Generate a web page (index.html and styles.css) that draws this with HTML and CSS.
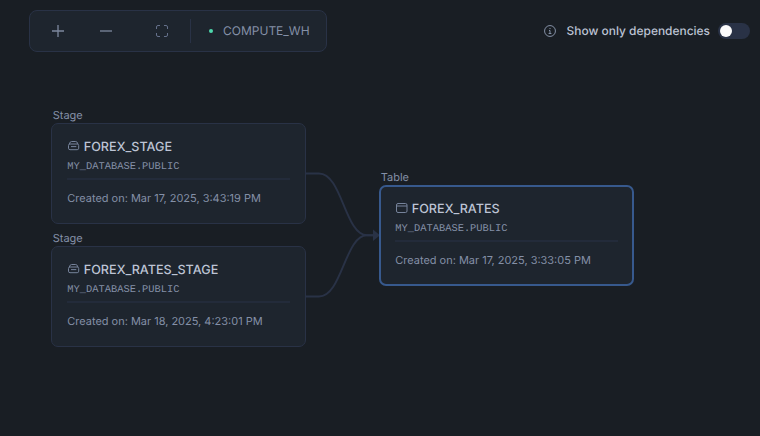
FILE: index.html
```html
<!DOCTYPE html>
<html lang="en">
<head>
<meta charset="utf-8">
<title>Lineage</title>
<link rel="stylesheet" href="styles.css">
</head>
<body>
<svg class="symbols" aria-hidden="true">
  <symbol id="stage" viewBox="0 0 13 12">
    <path d="M2.200 4.200 L3.300 2 Q3.700 1.500 4.500 1.500 H8.700 Q9.500 1.500 9.900 2 L11 4.200"/>
    <rect x="1.500" y="4" width="10.200" height="5.700" rx="1.500"/>
    <path d="M4 6.600 H9.300"/>
  </symbol>
  <symbol id="table" viewBox="0 0 13 12">
    <rect x="1.500" y="1.500" width="10.500" height="9" rx="1.500"/>
    <path d="M1.500 4 H12"/>
  </symbol>
</svg>
<header class="topbar">
  <div class="toolbar">
    <button class="tool zoom-in" aria-label="Zoom in"><svg width="12" height="12" viewBox="0 0 12 12"><path d="M6 0V12M0 6H12"/></svg></button>
    <button class="tool zoom-out" aria-label="Zoom out"><svg width="12" height="12" viewBox="0 0 12 12"><path d="M0 6H12"/></svg></button>
    <button class="tool fit" aria-label="Fit view"><svg width="12" height="12" viewBox="0 0 12 12"><path d="M.5 4V2Q.5.5 2 .5H4M8 .5H10Q11.500.5 11.500 2V4M11.500 8V10Q11.500 11.500 10 11.500H8M4 11.500H2Q.5 11.500.5 10V8"/></svg></button>
    <span class="divider"></span>
    <span class="status"></span>
    <span class="warehouse">COMPUTE_WH</span>
  </div>
  <div class="filter">
    <svg class="info" width="12" height="12" viewBox="0 0 12 12"><circle cx="6" cy="6" r="5.450"/><path d="M6 3V4.100M5 5.500H6V8.500M4.600 8.500H7.400"/></svg>
    <span class="filter-label">Show only dependencies</span>
    <span class="switch"><span class="knob"></span></span>
  </div>
</header>
<main class="canvas">
  <svg class="edges" width="760" height="436" viewBox="0 0 760 436">
    <path class="edge" d="M306 173.500H319C342 173.500 345 235.300 367 235.300H374"/>
    <path class="edge" d="M306 296.500H319C342 296.500 345 235.300 367 235.300H374"/>
    <path class="arrow" d="M373 229.500L380 235.300L373 241Z"/>
  </svg>
  <section class="node forex-stage">
    <div class="kind">Stage</div>
    <article class="card">
      <h2 class="name"><svg class="icon"><use href="#stage"/></svg>FOREX_STAGE</h2>
      <div class="schema">MY_DATABASE.PUBLIC</div>
      <div class="created">Created on: Mar 17, 2025, 3:43:19 PM</div>
    </article>
  </section>
  <section class="node rates-stage">
    <div class="kind">Stage</div>
    <article class="card">
      <h2 class="name"><svg class="icon"><use href="#stage"/></svg>FOREX_RATES_STAGE</h2>
      <div class="schema">MY_DATABASE.PUBLIC</div>
      <div class="created">Created on: Mar 18, 2025, 4:23:01 PM</div>
    </article>
  </section>
  <section class="node rates-table">
    <div class="kind">Table</div>
    <article class="card selected">
      <h2 class="name"><svg class="icon"><use href="#table"/></svg>FOREX_RATES</h2>
      <div class="schema">MY_DATABASE.PUBLIC</div>
      <div class="created">Created on: Mar 17, 2025, 3:33:05 PM</div>
    </article>
  </section>
</main>
</body>
</html>
```
FILE: styles.css
```css
* { box-sizing: border-box; }
body {
  margin: 0;
  width: 760px;
  height: 436px;
  overflow: hidden;
  position: relative;
  background: #191e24;
  color: #8490a7;
  font-family: Inter, "Liberation Sans", sans-serif;
  text-rendering: geometricPrecision;
}
svg { display: block; flex: none; }
.symbols { position: absolute; width: 0; height: 0; }
.topbar {
  display: flex;
  justify-content: space-between;
  align-items: center;
  padding: 10px 10px 0 29px;
}
.toolbar {
  display: flex;
  align-items: center;
  width: 298px;
  height: 42px;
  padding-left: 22px;
  border: 1px solid #293246;
  border-radius: 8px;
  background: #1e252e;
}
.tool {
  padding: 0;
  border: 0;
  background: none;
}
.tool svg {
  fill: none;
  stroke: #7d889e;
  stroke-width: 1.3;
}
.zoom-out { margin-left: 36px; }
.fit { margin-left: 44px; }
.fit svg { stroke: #65718b; stroke-width: 1; }
.divider {
  width: 1px;
  height: 24px;
  margin-left: 22px;
  background: #293246;
}
.status {
  width: 4px;
  height: 4px;
  margin-left: 18px;
  border-radius: 50%;
  background: #4fd8ad;
}
.warehouse {
  margin-left: 10px;
  font-size: 12px;
  line-height: 16px;
}
.filter { display: flex; align-items: center; }
.info { fill: none; stroke: #8490a5; stroke-width: 1; }
.filter-label {
  margin-left: 10.500px;
  color: #bdc4d5;
  font-size: 11.950px;
  font-weight: 500;
  line-height: 16px;
}
.switch {
  width: 32px;
  height: 16px;
  margin-left: 8px;
  padding: 2px;
  border-radius: 8px;
  background: #293246;
}
.knob {
  display: block;
  width: 12px;
  height: 12px;
  border-radius: 50%;
  background: #fbfbfb;
}
.edges { position: absolute; left: 0; top: 0; }
.edge { fill: none; stroke: #293246; stroke-width: 1.9; }
.arrow { fill: #293246; }
.node { position: absolute; width: 255px; }
.forex-stage { left: 51px; top: 107px; }
.rates-stage { left: 51px; top: 230px; }
.rates-table { left: 379px; top: 169px; }
.kind {
  height: 16px;
  padding-left: 1.700px;
  font-size: 11px;
  line-height: 16px;
}
.card {
  height: 101px;
  padding: 15px 14.600px 0 15.300px;
  border: 1px solid #293246;
  border-radius: 7px;
  background: #1e252e;
}
.selected { padding: 14px 13.600px 0 14.300px; border: 2px solid #37598d; }
.name {
  display: flex;
  align-items: center;
  gap: 4px;
  height: 16px;
  margin: 0;
  color: #bdc4d5;
  font-size: 12.6px;
  font-weight: 500;
  white-space: nowrap;
}
.icon {
  width: 13px;
  height: 12px;
  margin: 0 0 2px -.500px;
  fill: none;
  stroke: #76839b;
  stroke-width: 1;
}
.schema {
  height: 25px;
  padding-top: 6px;
  border-bottom: 2px solid #232b3a;
  font: 10.4px/12px "Liberation Mono", monospace;
}
.created {
  padding-top: 10px;
  font-size: 10.970px;
  line-height: 16px;
  white-space: nowrap;
}
```
